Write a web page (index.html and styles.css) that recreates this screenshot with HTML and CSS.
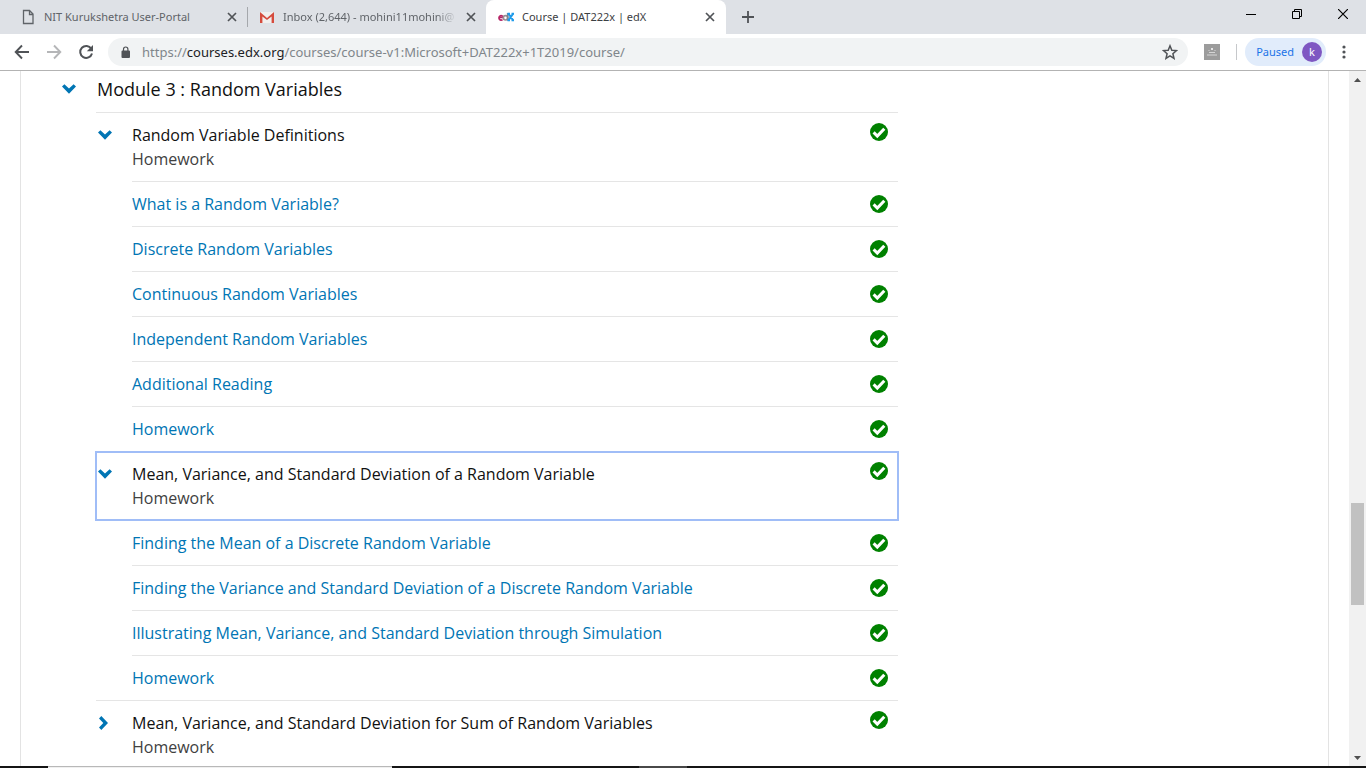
FILE: index.html
```html
<!DOCTYPE html>
<html lang="en">
<head>
<meta charset="utf-8">
<title>Course | DAT222x | edX</title>
<link rel="stylesheet" href="styles.css">
</head>
<body>
<svg class="sprite" aria-hidden="true">
  <symbol id="check" viewBox="0 0 18 18"><circle cx="9" cy="9" r="9"/><path d="M3.600 9.400l3.700 3.700 7-7.400" fill="none" stroke="#fff" stroke-width="3"/></symbol>
  <symbol id="down" viewBox="0 0 14 14"><path d="M0 4.600 2.400 2.200 7 6.400 11.600 2.200 14 4.600 7 11.800z"/></symbol>
  <symbol id="right" viewBox="0 0 14 14"><path d="M3.300 0 1 2.400 5.300 7 1 11.600 3.300 14 10 7z"/></symbol>
  <symbol id="close" viewBox="0 0 10 10"><path d="M1 1l8 8M9 1l-8 8" fill="none" stroke="currentColor" stroke-width="1.700"/></symbol>
</svg>

<header class="browser">
  <div class="tabstrip">
    <div class="tab first">
      <svg class="favicon" viewBox="0 0 16 16"><path d="M3.500 1.500h6l3.500 3.500v9.500h-9.500zM9.500 1.500v4h3.500" fill="none" stroke="#5f6368" stroke-width="1.300"/></svg>
      <span class="tab-title">NIT Kurukshetra User-Portal</span>
      <button class="tab-close" aria-label="Close tab"><svg viewBox="0 0 10 10"><use href="#close"/></svg></button>
    </div>
    <div class="tab second">
      <svg class="favicon" viewBox="0 0 16 16"><path d="M1 3h14v11H1z" fill="#f1efee"/><path d="M1 14V3l7 6 7-6v11h-2.400V7.500L8 11 3.400 7.500V14z" fill="#d54b3d"/></svg>
      <span class="tab-title fade">Inbox (2,644) - mohini11mohini@</span>
      <button class="tab-close" aria-label="Close tab"><svg viewBox="0 0 10 10"><use href="#close"/></svg></button>
    </div>
    <div class="tab active">
      <svg class="favicon" viewBox="0 0 16 16" fill="none" stroke-width="1.700"><path d="M1.500 8.500h3.700a2.100 2.300 0 1 0-.7 2.100" stroke="#b72667"/><circle cx="7.500" cy="8.800" r="2.200" stroke="#9b8c92"/><path d="M9.700 4v7.700" stroke="#7d8790"/><path d="M10.500 4.800l4.500 6.400M15 4.800l-4.500 6.400M9.500 4.800h2.500M13.500 4.800h2.500M9.500 11.200h2.500M13.500 11.200h2.500" stroke="#1f9bea" stroke-width="2"/></svg>
      <span class="tab-title">Course | DAT222x | edX</span>
      <button class="tab-close" aria-label="Close tab"><svg viewBox="0 0 10 10"><use href="#close"/></svg></button>
    </div>
    <button class="new-tab" aria-label="New tab"><svg viewBox="0 0 12 12"><path d="M6 0v12M0 6h12" stroke="#505357" stroke-width="1.800"/></svg></button>
    <div class="window-controls">
      <button aria-label="Minimize"><svg viewBox="0 0 10 10"><path d="M0 5.500h10" stroke="#000"/></svg></button>
      <button aria-label="Restore"><svg viewBox="0 0 10 10"><path d="M.5 2.500h7v7h-7zM2.500 2.500v-2h7v7h-2" fill="none" stroke="#000"/></svg></button>
      <button aria-label="Close"><svg viewBox="0 0 10 10"><path d="M0 0l10 10M10 0L0 10" stroke="#000" stroke-width="1.200"/></svg></button>
    </div>
  </div>
  <div class="toolbar">
    <nav class="nav-buttons">
      <button aria-label="Back"><svg viewBox="0 0 16 16"><path d="M15 8H2M8 1.500L1.700 8 8 14.500" fill="none" stroke="#505357" stroke-width="1.900"/></svg></button>
      <button aria-label="Forward"><svg viewBox="0 0 16 16"><path d="M1 8h13M8 1.500L14.300 8 8 14.500" fill="none" stroke="#b5b6b8" stroke-width="1.900"/></svg></button>
      <button aria-label="Reload"><svg viewBox="0 0 16 16"><path d="M13.300 4.700A6 6 0 1 0 14 9.500" fill="none" stroke="#505357" stroke-width="2"/><path d="M15 1v6.200H8.800z" fill="#505357"/></svg></button>
    </nav>
    <div class="omnibox">
      <svg class="lock" viewBox="0 0 10 12"><path d="M1 4.500h7a1 1 0 0 1 1 1V11a1 1 0 0 1-1 1H1.500a1 1 0 0 1-1-1V5.500a1 1 0 0 1 1-1z" fill="#505357"/><path d="M2.500 5V3.200a2.200 2.200 0 0 1 4.400 0V5" fill="none" stroke="#505357" stroke-width="1.200"/></svg>
      <div class="url">https://<span class="host">courses.edx.org</span>/courses/course-v1:Microsoft+DAT222x+1T2019/course/</div>
      <button class="star" aria-label="Bookmark this page"><svg viewBox="0 0 16 16"><path d="M8 1.800l1.800 4.400 4.700.4-3.600 3.100 1.100 4.600L8 11.800l-4 2.500 1.100-4.600-3.600-3.100 4.700-.4z" fill="none" stroke="#505357" stroke-width="1.500"/></svg></button>
    </div>
    <button class="extension" aria-label="Extension"><svg viewBox="0 0 16 16"><path d="M0 0h16v16H0z" fill="#9c9c9c"/><path d="M5 8.500h6M3 11h10" stroke="#d5d5d5" stroke-width="1.200"/><circle cx="8" cy="5" r="1" fill="#fff"/><path d="M4 6.500h2M10 6.500h2" stroke="#b9b9b9"/></svg></button>
    <span class="divider"></span>
    <button class="profile">Paused<span class="avatar">k</span></button>
    <button class="menu" aria-label="Menu"><svg viewBox="0 0 4 14" fill="#505357"><circle cx="2" cy="2" r="1.600"/><circle cx="2" cy="7" r="1.600"/><circle cx="2" cy="12" r="1.600"/></svg></button>
  </div>
</header>

<div class="viewport">
  <main class="panel">
    <div class="outline">
      <button class="module" aria-expanded="true"><svg class="chevron"><use href="#down"/></svg><span>Module 3 : Random Variables</span></button>
      <div class="sections">
        <section class="section">
          <button class="section-head" aria-expanded="true"><svg class="chevron"><use href="#down"/></svg><span class="heading">Random Variable Definitions<span class="kind">Homework</span></span><svg class="check"><use href="#check"/></svg></button>
          <ul class="units">
            <li><a href="#">What is a Random Variable?<svg class="check"><use href="#check"/></svg></a></li>
            <li><a href="#">Discrete Random Variables<svg class="check"><use href="#check"/></svg></a></li>
            <li><a href="#">Continuous Random Variables<svg class="check"><use href="#check"/></svg></a></li>
            <li><a href="#">Independent Random Variables<svg class="check"><use href="#check"/></svg></a></li>
            <li><a href="#">Additional Reading<svg class="check"><use href="#check"/></svg></a></li>
            <li><a href="#">Homework<svg class="check"><use href="#check"/></svg></a></li>
          </ul>
        </section>
        <section class="section">
          <button class="section-head focused" aria-expanded="true"><svg class="chevron"><use href="#down"/></svg><span class="heading">Mean, Variance, and Standard Deviation of a Random Variable<span class="kind">Homework</span></span><svg class="check"><use href="#check"/></svg></button>
          <ul class="units">
            <li><a href="#">Finding the Mean of a Discrete Random Variable<svg class="check"><use href="#check"/></svg></a></li>
            <li><a href="#">Finding the Variance and Standard Deviation of a Discrete Random Variable<svg class="check"><use href="#check"/></svg></a></li>
            <li><a href="#">Illustrating Mean, Variance, and Standard Deviation through Simulation<svg class="check"><use href="#check"/></svg></a></li>
            <li><a href="#">Homework<svg class="check"><use href="#check"/></svg></a></li>
          </ul>
        </section>
        <section class="section">
          <button class="section-head" aria-expanded="false"><svg class="chevron"><use href="#right"/></svg><span class="heading">Mean, Variance, and Standard Deviation for Sum of Random Variables<span class="kind">Homework</span></span><svg class="check"><use href="#check"/></svg></button>
        </section>
      </div>
    </div>
  </main>
  <div class="scrollbar">
    <svg class="arrow" viewBox="0 0 17 17"><path d="M5 11l3.500-4 3.500 4z"/></svg>
    <div class="before"></div>
    <div class="thumb"></div>
    <div class="after"></div>
    <svg class="arrow" viewBox="0 0 17 17"><path d="M5 7l3.500 4L12 7z"/></svg>
  </div>
</div>
<footer class="taskbar"><span class="search"></span><span class="running"></span></footer>
</body>
</html>
```
FILE: styles.css
```css
* { box-sizing: border-box; }
body {
  margin: 0;
  height: 100vh;
  display: flex;
  flex-direction: column;
  overflow: hidden;
  background: #fff;
  font-family: "Open Sans", "Noto Sans", sans-serif;
  font-size: 16px;
  line-height: 24px;
}
button {
  margin: 0;
  padding: 0;
  border: 0;
  background: none;
  color: inherit;
  font: inherit;
  text-align: left;
}
svg { display: block; flex: none; }
.sprite { position: absolute; width: 0; height: 0; }

/* Browser frame */
.browser { flex: none; border-bottom: 1px solid #b3b3b3; font-family: "Noto Sans", sans-serif; }
.tabstrip { display: flex; height: 34px; background: #dee1e6; }
.tab {
  display: flex;
  align-items: center;
  gap: 8px;
  width: 240px;
  padding: 0 10px 0 12px;
  color: #5f6368;
  font-size: 11px;
  line-height: 16px;
}
.tab.first { width: 248px; padding-left: 20px; background: linear-gradient(#a5a8ac, #a5a8ac) right center / 1px 20px no-repeat; }
.tab.second { width: 238px; padding-left: 11px; padding-right: 9px; }
.tab.active { background: #fff; border-radius: 8px 8px 0 0; color: #3c4043; }
.favicon { width: 16px; height: 16px; }
.tab-title { flex: 1; min-width: 0; white-space: nowrap; }
.fade { -webkit-mask-image: linear-gradient(90deg, #000 88%, transparent); mask-image: linear-gradient(90deg, #000 88%, transparent); }
.tab-close { display: grid; place-items: center; width: 12px; height: 16px; color: #505357; }
.tab-close svg { width: 10px; height: 10px; }
.new-tab { display: grid; place-items: center; width: 44px; }
.new-tab svg { width: 12px; height: 12px; }
.window-controls { display: flex; height: 28px; margin-left: auto; }
.window-controls button { display: grid; place-items: center; width: 46px; }
.window-controls svg { width: 10px; height: 10px; }

.toolbar { display: flex; align-items: center; height: 36px; padding-right: 20px; }
.nav-buttons { display: flex; gap: 16px; padding: 0 14px; }
.nav-buttons svg { width: 16px; height: 16px; }
.omnibox {
  display: flex;
  align-items: center;
  flex: 1;
  min-width: 0;
  height: 28px;
  padding: 0 10px 0 13px;
  border-radius: 14px;
  background: #f1f3f4;
}
.lock { width: 10px; height: 12px; }
.url { flex: 1; padding-left: 11px; color: #80868b; font-size: 13px; line-height: 20px; white-space: nowrap; overflow: hidden; }
.host { color: #202124; }
.star svg, .extension svg { width: 16px; height: 16px; }
.extension { margin: 0 16px; }
.divider { width: 1px; height: 16px; background: #c6c8cb; }
.profile {
  display: flex;
  align-items: center;
  gap: 8px;
  height: 28px;
  margin-left: 8px;
  padding: 0 4px 0 11px;
  border-radius: 14px;
  background: #e1ecfb;
  color: #1a73e8;
  font-size: 11px;
}
.avatar { width: 20px; height: 20px; border-radius: 50%; background: #7e57c2; color: #fff; line-height: 20px; text-align: center; }
.menu { margin-left: 16px; }
.menu svg { width: 4px; height: 14px; }

/* Course outline */
.viewport { display: flex; flex: 1; min-height: 0; }
.panel {
  flex: 1;
  min-width: 0;
  margin: 0 20px;
  padding: 0 430px 0 41px;
  border: solid #e3e3e3;
  border-width: 0 1px;
  overflow: hidden;
}
.module { display: flex; align-items: flex-start; gap: 21px; width: 100%; padding: 6px 0 11px; color: #111; font-size: 18px; }
.sections { padding-left: 34px; }
.chevron { width: 14px; height: 14px; margin-top: 5px; fill: #0075b4; }
.check { width: 18px; height: 18px; fill: #008100; }
.section { border-top: 1px solid #e5e5e5; }
.section-head { display: flex; align-items: flex-start; width: 100%; padding: 10px 10px 10px 2px; color: #111; }
.heading { flex: 1; padding-left: 20px; }
.kind { display: block; color: #414141; }
.focused { outline: 2px solid #a0bdf7; outline-offset: -1px; }
.units { margin: 0 0 0 36px; padding: 0; list-style: none; }
.units li { border-top: 1px solid #e5e5e5; }
.units a { display: flex; align-items: center; justify-content: space-between; padding: 10px 10px 10px 0; color: #0075b4; text-decoration: none; }

/* Scrollbar and taskbar edge */
.scrollbar { display: flex; flex-direction: column; width: 17px; padding: 0 2px; background: #f1f1f1; }
.arrow { width: 17px; height: 17px; margin-left: -2px; fill: #505050; }
.before { flex: 415; }
.thumb { flex: 102; background: #c1c1c1; }
.after { flex: 144; }
.taskbar { display: flex; flex: none; height: 2px; background: #151515; }
.search { width: 344px; margin-left: 48px; background: #f0f0f0; border-top: 1px solid #b8b8b8; }
.running { width: 48px; margin-left: 247px; background: #484848; }
```
